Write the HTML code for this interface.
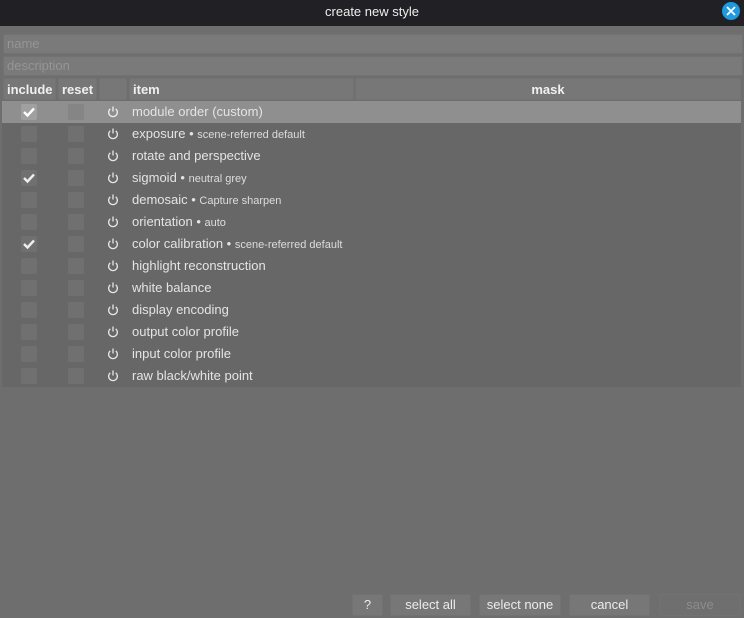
<!DOCTYPE html>
<html><head><style>
body{margin:0;width:744px;height:618px;background:#6e6e6e;font-family:"Liberation Sans",sans-serif;position:relative;overflow:hidden;color:#e8e8e8}
.abs{position:absolute}
.title{left:0;top:0;width:744px;height:26px;background:#212125;color:#eee;font-size:13px;text-align:center;line-height:24px}
.close{right:4px;top:2px;width:18px;height:18px;border-radius:50%;background:#1e9ae0}
.inp{left:3px;width:735px;height:18px;background:#7a7a7a;border:1px solid #727272;border-radius:2px;color:#959595;font-size:13px;line-height:18px;padding-left:3px;box-sizing:content-box}
.hd{top:78px;height:22px;background:#777;border:1px solid #737373;box-sizing:border-box;font-weight:bold;font-size:13px;line-height:21px;color:#f0f0f0;border-radius:2px}
.tbl{left:2px;top:101px;width:739px;height:286px;background:#676767}
.row{position:absolute;left:0;width:739px;height:22px;font-size:13px;line-height:22px}
.cb{position:absolute;top:3px;width:16px;height:16px;background:#707070;border-radius:2px}
.pw{position:absolute;left:105px;top:5px}
.it{position:absolute;left:130px;color:#e4e4e4}
.it small{font-size:11px;color:#ddd}
.btn{top:594px;height:22px;background:#777;border:1px solid #727272;box-sizing:border-box;border-radius:2px;color:#ececec;font-size:13px;text-align:center;line-height:20px}
</style></head><body>
<div class="abs title">create new style</div>
<svg class="abs close" viewBox="0 0 18 18"><path d="M5 5L13 13M13 5L5 13" stroke="#fff" stroke-width="1.8"/></svg>
<div class="abs inp" style="top:34px">name</div>
<div class="abs inp" style="top:56px">description</div>
<div class="abs hd" style="left:3px;width:53px;padding-left:3px">include</div>
<div class="abs hd" style="left:58px;width:39px;padding-left:3px">reset</div>
<div class="abs hd" style="left:99px;width:28px"></div>
<div class="abs hd" style="left:129px;width:225px;padding-left:3px">item</div>
<div class="abs hd" style="left:355px;width:386px;text-align:center">mask</div>
<div class="abs tbl">
<div class="row" style="top:0;background:#8f8f8f"><div class="cb" style="left:19px;background:#a0a0a0"><svg width="16" height="16"><path d="M3 8L6.5 11.5L13 4.5" stroke="#fff" stroke-width="2.4" fill="none"/></svg></div><div class="cb" style="left:66px;background:#858585"></div><svg class="pw" width="12" height="12" viewBox="0 0 11 11"><path d="M3 2.6A4 4 0 1 0 8 2.6M5.5 0.5V5" stroke="#eee" stroke-width="1.2" fill="none"/></svg><span class="it">module order (custom)</span></div>
</div>
<script>
var rows=[["exposure","scene-referred default",0],["rotate and perspective","",0],["sigmoid","neutral grey",1],["demosaic","Capture sharpen",0],["orientation","auto",0],["color calibration","scene-referred default",1],["highlight reconstruction","",0],["white balance","",0],["display encoding","",0],["output color profile","",0],["input color profile","",0],["raw black/white point","",0]];
var t=document.querySelector('.tbl'),h='';
rows.forEach(function(r,i){h+='<div class="row" style="top:'+(22*(i+1))+'px"><div class="cb" style="left:19px">'+(r[2]?'<svg width="16" height="16"><path d="M3 8L6.5 11.5L13 4.5" stroke="#eee" stroke-width="2.4" fill="none"/></svg>':'')+'</div><div class="cb" style="left:66px"></div><svg class="pw" width="12" height="12" viewBox="0 0 11 11"><path d="M3 2.6A4 4 0 1 0 8 2.6M5.5 0.5V5" stroke="#e6e6e6" stroke-width="1.2" fill="none"/></svg><span class="it">'+r[0]+(r[1]?' • <small>'+r[1]+'</small>':'')+'</span></div>';});
t.insertAdjacentHTML('beforeend',h);
</script>
<div class="abs btn" style="left:352px;width:31px">?</div>
<div class="abs btn" style="left:390px;width:81px">select all</div>
<div class="abs btn" style="left:479px;width:82px">select none</div>
<div class="abs btn" style="left:569px;width:81px">cancel</div>
<div class="abs btn" style="left:659px;width:82px;background:#6f6f6f;color:#8c8c8c">save</div>
</body></html>
